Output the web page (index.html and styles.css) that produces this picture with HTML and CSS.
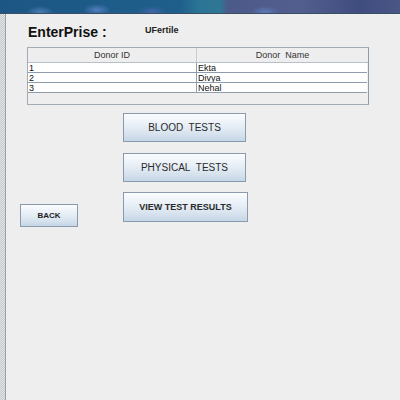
FILE: index.html
```html
<!DOCTYPE html>
<html>
<head>
<meta charset="utf-8">
<link rel="stylesheet" href="styles.css">
</head>
<body>
<div class="banner"></div>
<div class="frame">
  <div class="edge"></div>
  <div class="panel">
    <div class="title-row">
      <div class="title">EnterPrise :</div>
      <div class="org">UFertile</div>
    </div>
    <div class="table">
      <div class="row head">
        <div class="cell">Donor ID</div>
        <div class="cell">Donor&nbsp; Name</div>
      </div>
      <div class="row">
        <div class="cell">1</div>
        <div class="cell">Ekta</div>
      </div>
      <div class="row">
        <div class="cell">2</div>
        <div class="cell">Divya</div>
      </div>
      <div class="row">
        <div class="cell">3</div>
        <div class="cell">Nehal</div>
      </div>
    </div>
    <div class="actions">
      <div class="left-col">
        <button class="btn back">BACK</button>
      </div>
      <div class="right-col">
        <button class="btn big">BLOOD&nbsp; TESTS</button>
        <button class="btn big">PHYSICAL&nbsp; TESTS</button>
        <button class="btn big wide">VIEW TEST RESULTS</button>
      </div>
    </div>
  </div>
</div>
</body>
</html>
```
FILE: styles.css
```css
html, body {
  margin: 0;
  padding: 0;
  width: 400px;
  height: 400px;
  overflow: hidden;
  background: #eeeeee;
  font-family: "Liberation Sans", Arial, sans-serif;
}
.banner {
  height: 13px;
  border-bottom: 1px solid #3a4f66;
  background:
    radial-gradient(ellipse 14px 6px at 40px 12px, rgba(120,160,220,0.5), transparent),
    radial-gradient(ellipse 14px 6px at 97px 10px, rgba(120,150,230,0.6), transparent),
    radial-gradient(ellipse 14px 6px at 152px 12px, rgba(110,110,200,0.5), transparent),
    radial-gradient(ellipse 14px 6px at 265px 12px, rgba(110,150,230,0.5), transparent),
    linear-gradient(90deg, #1c5684 0%, #1f5f8c 45%, #2c7595 50%, #2e7795 55%, #4c5a8a 57%, #525e8e 75%, #3f4d7e 90%, #4a5686 100%);
}
.frame {
  display: flex;
  height: 386px;
}
.edge {
  width: 5px;
  border-right: 1px solid #8ea3b8;
  background-color: #e4e4e4;
  background-image:
    linear-gradient(45deg, #c8c8c8 25%, transparent 25%, transparent 75%, #c8c8c8 75%),
    linear-gradient(45deg, #c8c8c8 25%, transparent 25%, transparent 75%, #c8c8c8 75%);
  background-size: 2px 2px;
  background-position: 0 0, 1px 1px;
}
.panel {
  flex: 1;
  background: #eeeeee;
}
.title-row {
  display: flex;
  margin: 10px 0 0 22px;
  height: 16px;
}
.title {
  width: 117px;
  font-size: 14px;
  line-height: 16px;
  font-weight: bold;
  color: #111;
}
.org {
  font-size: 9px;
  line-height: 11px;
  font-weight: bold;
  color: #222;
  margin-top: 1px;
}
.table {
  margin: 7px 0 0 21px;
  width: 342px;
  height: 58px;
  box-sizing: border-box;
  border: 1px solid #a3acb6;
  border-right-color: #8d9aa8;
  background: #eeeeee;
}
.row {
  display: grid;
  grid-template-columns: 169px 1fr;
  height: 10px;
  box-sizing: border-box;
  border-bottom: 1px solid #8f9cab;
  background: #ffffff;
  margin-right: 1px;
}
.row .cell {
  font-size: 9px;
  line-height: 10px;
  color: #111;
  padding-left: 1px;
  overflow: hidden;
  white-space: nowrap;
}
.row .cell:first-child {
  border-right: 1px solid #8f9cab;
}
.row.head {
  height: 15px;
  background: #eeeeee;
  border-bottom: 1px solid #b8bfc7;
  margin-right: 0;
}
.row.head .cell {
  text-align: center;
  line-height: 14px;
  color: #333;
  padding-left: 0;
}
.row.head .cell:first-child {
  border-right: 1px solid #c6ccd2;
}
.actions {
  display: flex;
  margin-top: 8px;
}
.left-col {
  width: 117px;
  padding-left: 14px;
  box-sizing: border-box;
}
.right-col {
  display: flex;
  flex-direction: column;
  align-items: flex-start;
  gap: 11px;
}
.btn {
  font-family: "Liberation Sans", Arial, sans-serif;
  border: 1px solid #8a9bad;
  background: linear-gradient(180deg, #fbfcfe 0%, #e6eef6 45%, #d3e0ec 80%, #c6d6e6 100%);
  color: #2a2a2a;
  padding: 0;
  margin: 0;
  box-sizing: border-box;
  cursor: default;
}
.big {
  width: 123px;
  height: 29px;
  font-size: 10px;
}
.wide {
  width: 125px;
  height: 30px;
  margin-top: -1px;
  font-weight: bold;
  font-size: 9px;
}
.back {
  margin-top: 91px;
  width: 58px;
  height: 23px;
  font-size: 8px;
  font-weight: bold;
  color: #222;
}
```
